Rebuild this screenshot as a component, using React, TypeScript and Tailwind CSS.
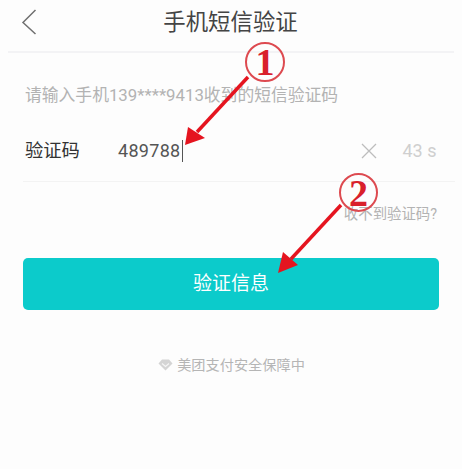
const CJK = "font-['Roboto','Noto_Sans_CJK_SC',sans-serif]";

const Annotation = ({ num, className }: { num: string; className: string }) => (
  <div
    className={`absolute flex items-center justify-center rounded-full border-2 border-[#dd4a50] font-['Liberation_Serif',serif] font-bold text-[38px] leading-none text-[#d9202b] ${className}`}
  >
    {num}
  </div>
);

export default function App() {
  return (
    <div className={`relative w-[462px] h-[469px] overflow-hidden bg-[#fdfdfd] ${CJK}`}>
      {/* Header */}
      <div className="relative mx-2 h-[53px] flex items-center justify-center border-b-2 border-[#f3f3f5] pb-[7px]">
        <svg className="absolute left-[12px] top-[8px]" width="18" height="28" viewBox="0 0 18 28" fill="none">
          <path d="M15.5 2 L3 14.5 L15.5 26" stroke="#707070" strokeWidth="1.5" />
        </svg>
        <h1 className="text-[22.4px] leading-none font-normal text-[#444] -ml-[1px]">手机短信验证</h1>
      </div>

      <p className="ml-[25px] mt-[32px] text-[16.8px] leading-[20px] text-[#b3b3b3]">
        请输入手机139****9413收到的短信验证码
      </p>

      {/* Code row */}
      <div className="ml-[23px] mr-[7px] mt-[24px] h-[53px] pb-[9px] flex items-center border-b border-[#f3f3f3]">
        <span className="ml-[2px] w-[93px] text-[18.3px] font-normal text-[#333]">验证码</span>
        <span className="text-[18px] tracking-[0.3px] text-[#555]">489788</span>
        <span className="ml-[1px] w-px h-[22px] bg-[#555]" />
        <svg className="ml-[178px]" width="16" height="16" viewBox="0 0 16 16" fill="none">
          <path d="M1 1 L15 15 M15 1 L1 15" stroke="#bdbdbd" strokeWidth="1.3" />
        </svg>
        <span className="ml-[26px] text-[18px] text-[#cfcfcf]">43 s</span>
      </div>

      <div className="mt-[23px] mr-[25px] text-right text-[14.4px] leading-[20px] text-[#b3b3b3]">收不到验证码?</div>

      <button className="ml-[23px] mt-[33px] w-[416px] h-[52px] rounded-[5px] bg-[#0ccbcb] text-[19px] font-normal text-white">
        验证信息
      </button>

      {/* Footer */}
      <div className="mt-[45px] flex items-center justify-center gap-[4px] pl-[1px] text-[14.2px] leading-[20px] text-[#b5b5b5]">
        <svg width="15" height="12" viewBox="0 0 15 12">
          <path d="M4 0.5 H11 L14.5 4.5 L7.5 11.5 L0.5 4.5 Z" fill="#d4d4d4" />
          <path d="M4 4.5 L7.5 7.5 L11 4.5" stroke="#f5f5f5" strokeWidth="1.2" fill="none" />
        </svg>
        <span>美团支付安全保障中</span>
      </div>

      {/* Red annotations drawn on top of the screen */}
      <Annotation num="1" className="left-[245px] top-[42px] w-[40px] h-[40px]" />
      <Annotation num="2" className="left-[339px] top-[173px] w-[39px] h-[39px]" />
      <svg className="absolute inset-0 pointer-events-none" width="462" height="469" viewBox="0 0 462 469">
        <path d="M248 77 L197 132" stroke="#e5141f" strokeWidth="3.5" />
        <path d="M185 145 L188 127 L205 138 Z" fill="#e5141f" />
        <path d="M341 205 L291 259" stroke="#e5141f" strokeWidth="3.5" />
        <path d="M278 273 L283 252 L298 265 Z" fill="#e5141f" />
      </svg>
    </div>
  );
}
